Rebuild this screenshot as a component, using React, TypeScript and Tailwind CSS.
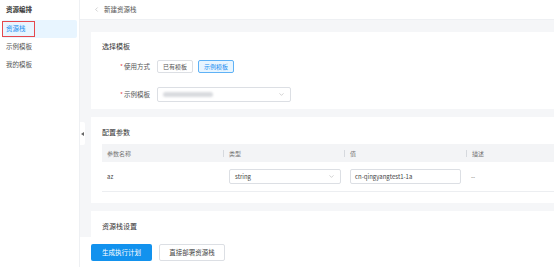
import { ChevronDown, ChevronLeft } from "lucide-react";

const font = { fontFamily: '"Noto Sans CJK SC", "Noto Sans", sans-serif' };

function Sidebar() {
  return (
    <aside className="w-[80px] shrink-0 bg-white border-r border-[#eef0f3] flex flex-col">
      <div className="h-[20px] pl-[6px] flex items-center text-[6.5px] font-bold text-[#333]">
        资源编排
      </div>
      <div className="mx-[2px] h-[18px] bg-[#e8f5ff] rounded-[2px] flex items-center">
        <span className="h-[16px] w-[33px] border-[1.5px] border-[#e5484d] flex items-center pl-[3px] text-[6.5px] text-[#1c8ef0]">
          资源栈
        </span>
      </div>
      <div className="h-[18px] pl-[6px] flex items-center text-[6.5px] text-[#555]">示例模板</div>
      <div className="h-[18px] pl-[6px] flex items-center text-[6.5px] text-[#555]">我的模板</div>
    </aside>
  );
}

function Label({ children }: { children: string }) {
  return (
    <div className="w-[48px] flex justify-end items-center text-[6.5px] text-[#555]">
      <span className="text-[#e5484d] mr-[1px]">*</span>
      {children}
    </div>
  );
}

function TemplateCard() {
  return (
    <section className="bg-white h-[77px] pt-[10px] pl-[11px]">
      <div className="h-[8px] flex items-center text-[7px] text-[#333]">选择模板</div>
      <div className="mt-[10px] flex items-center gap-[7px]">
        <Label>使用方式</Label>
        <div className="flex gap-[5px]">
          <button className="w-[36px] h-[13px] border border-[#dcdfe4] rounded-[2px] bg-white text-[6px] text-[#555]">
            已有模板
          </button>
          <button className="w-[36px] h-[13px] border border-[#5fb2f6] rounded-[2px] bg-[#e8f5ff] text-[6px] text-[#1c8ef0]">
            示例模板
          </button>
        </div>
      </div>
      <div className="mt-[14px] flex items-center gap-[7px]">
        <Label>示例模板</Label>
        <div className="w-[134px] h-[15px] border border-[#dcdfe4] rounded-[2px] flex items-center justify-between pl-[5px] pr-[5px]">
          <div className="w-[50px] h-[5px] bg-[#d9dbdf] rounded-full blur-[1px]" />
          <ChevronDown size={7} className="text-[#999]" strokeWidth={1.5} />
        </div>
      </div>
    </section>
  );
}

function ColHead({ w, children, divider = true }: { w?: string; children: string; divider?: boolean }) {
  return (
    <div className={`${w ?? "flex-1"} h-full flex items-center`}>
      {divider && <span className="w-px h-[7px] bg-[#d6d9de] mr-[5px]" />}
      <span className={divider ? "" : "pl-[5px]"}>{children}</span>
    </div>
  );
}

function ParamsCard() {
  return (
    <section className="bg-white h-[86px] pt-[11px] pl-[11px]">
      <div className="h-[8px] flex items-center text-[7px] text-[#333]">配置参数</div>
      <div className="mt-[8px] h-[18px] bg-[#f3f4f6] flex text-[6px] text-[#777]">
        <ColHead w="w-[121px]" divider={false}>参数名称</ColHead>
        <ColHead w="w-[121px]">类型</ColHead>
        <ColHead w="w-[122px]">值</ColHead>
        <ColHead>描述</ColHead>
      </div>
      <div className="h-[30px] border-b border-[#eceef1] flex items-center text-[6px] text-[#444]">
        <div className="w-[121px] pl-[5px]">az</div>
        <div className="w-[121px] pl-[6px]">
          <div className="w-[112px] h-[15px] border border-[#dcdfe4] rounded-[2px] flex items-center justify-between px-[5px]">
            <span>string</span>
            <ChevronDown size={7} className="text-[#999]" strokeWidth={1.5} />
          </div>
        </div>
        <div className="w-[122px] pl-[6px]">
          <div className="w-[111px] h-[15px] border border-[#dcdfe4] rounded-[2px] flex items-center px-[4px]">
            cn-qingyangtest1-1a
          </div>
        </div>
        <div className="flex-1 pl-[5px] text-[#666]">--</div>
      </div>
    </section>
  );
}

export default function App() {
  return (
    <div className="w-[554px] h-[267px] flex overflow-hidden bg-white" style={font}>
      <Sidebar />
      <main className="relative flex-1 flex flex-col bg-[#f5f6f8] min-w-0">
        <header className="h-[20px] shrink-0 bg-white border-b border-[#eef0f3] flex items-center pl-[13px] gap-[4px]">
          <ChevronLeft size={7} className="text-[#999]" strokeWidth={1.5} />
          <span className="text-[6.5px] text-[#555]">新建资源栈</span>
        </header>
        <div className="flex-1 flex flex-col gap-[8px] pl-[11px] pt-[12px]">
          <TemplateCard />
          <ParamsCard />
          <section className="bg-white flex-1 pl-[11px] pt-[11px]">
            <div className="h-[8px] flex items-center text-[7px] text-[#333]">资源栈设置</div>
          </section>
        </div>
        <footer className="h-[30px] shrink-0 bg-white flex items-center gap-[7px] pl-[11px] pt-[1px]">
          <button className="w-[61px] h-[17px] rounded-[2px] bg-[#1292ee] text-white text-[6.5px]">
            生成执行计划
          </button>
          <button className="w-[66px] h-[17px] rounded-[2px] border border-[#dcdfe4] bg-white text-[#444] text-[6.5px]">
            直接部署资源栈
          </button>
        </footer>
        <div className="absolute left-0 top-[122px] w-[5px] h-[23px] bg-white rounded-r-[2px] flex items-center justify-center">
          <span className="w-0 h-0 border-y-[2.5px] border-y-transparent border-r-[3px] border-r-[#666]" />
        </div>
      </main>
    </div>
  );
}
